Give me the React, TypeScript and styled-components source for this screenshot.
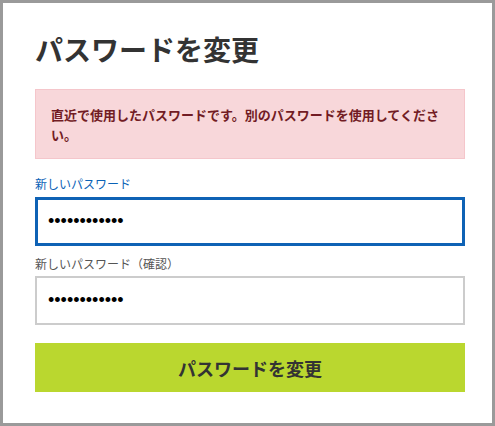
import React from "react";
import styled, { createGlobalStyle } from "styled-components";

const Global = createGlobalStyle`
  html, body { margin: 0; padding: 0; background: #ffffff; }
  body { font-family: "Noto Sans CJK JP", "Noto Sans", sans-serif; }
  * { box-sizing: border-box; }
`;

const Frame = styled.div`
  width: 495px;
  height: 426px;
  border: 3px solid #9a9a9a;
  background: #ffffff;
  padding: 29px 27px 0 32px;
  display: flex;
  flex-direction: column;
`;

const Title = styled.h1`
  margin: 0;
  font-size: 28px;
  line-height: 34px;
  font-weight: 700;
  color: #333333;
`;

const Alert = styled.div`
  margin-top: 23px;
  border: 1px solid #f5c6cb;
  background: #f8d7da;
  color: #721c24;
  font-size: 13px;
  line-height: 20px;
  font-weight: 600;
  padding: 15px 15px 13px 15px;
`;

const Field = styled.div<{ $top: number }>`
  display: flex;
  flex-direction: column;
  margin-top: ${(p) => p.$top}px;
`;

const Label = styled.label<{ $active?: boolean }>`
  font-size: 12px;
  line-height: 18px;
  color: ${(p) => (p.$active ? "#0a62b6" : "#555555")};
  margin-bottom: ${(p) => (p.$active ? 4 : 3)}px;
`;

const Input = styled.input<{ $active?: boolean }>`
  height: 49px;
  width: 100%;
  border: ${(p) => (p.$active ? "3px solid #0e62b5" : "2px solid #cccccc")};
  padding: 0 0 0 ${(p) => (p.$active ? 10 : 11)}px;
  font-family: "Liberation Sans", Arial, sans-serif;
  font-size: 18px;
  color: #000000;
  background: #ffffff;
  outline: none;
  border-radius: 0;
`;

const Button = styled.button`
  margin-top: 18px;
  height: 49px;
  width: 100%;
  border: none;
  background: #bad72f;
  color: #333333;
  font-family: "Noto Sans CJK JP", "Noto Sans", sans-serif;
  font-size: 18px;
  font-weight: 700;
  cursor: pointer;
`;

export default function App() {
  return (
    <>
      <Global />
      <Frame>
        <Title>パスワードを変更</Title>
        <Alert>直近で使用したパスワードです。別のパスワードを使用してください。</Alert>
        <Field $top={16}>
          <Label $active>新しいパスワード</Label>
          <Input $active type="password" value="abcdefghijkl" readOnly />
        </Field>
        <Field $top={9}>
          <Label>新しいパスワード（確認）</Label>
          <Input type="password" value="abcdefghijkl" readOnly />
        </Field>
        <Button>パスワードを変更</Button>
      </Frame>
    </>
  );
}
